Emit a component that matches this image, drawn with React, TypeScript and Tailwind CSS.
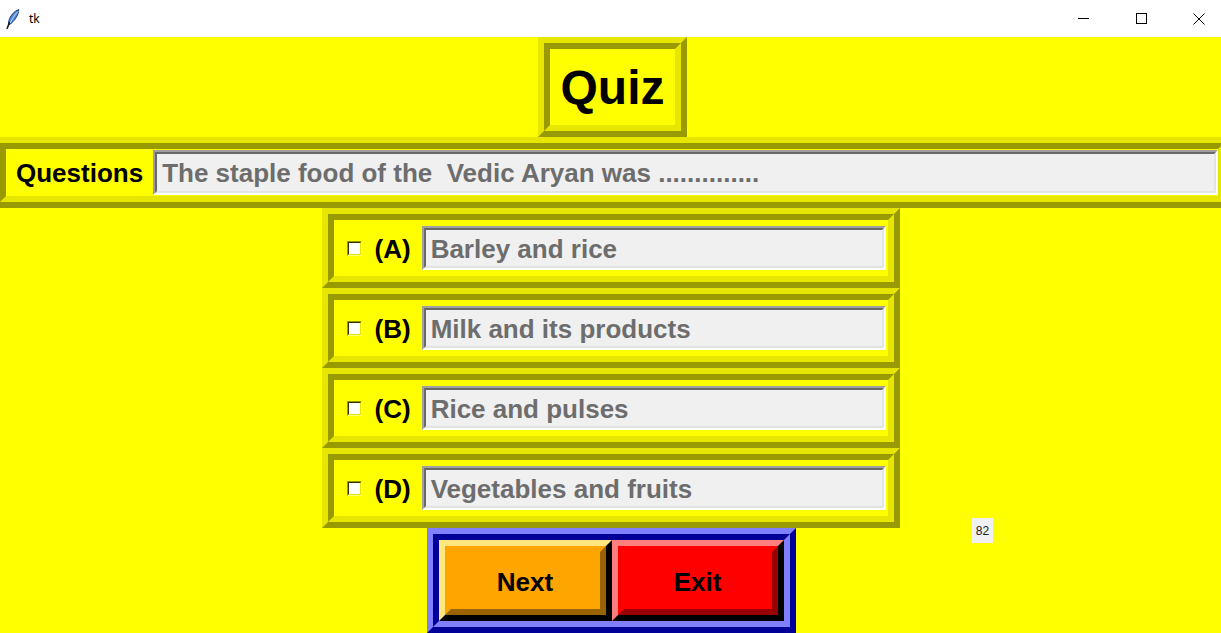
import React from "react";

type Option = {
  key: string;
  text: string;
};

const options: Option[] = [
  { key: "A", text: "Barley and rice" },
  { key: "B", text: "Milk and its products" },
  { key: "C", text: "Rice and pulses" },
  { key: "D", text: "Vegetables and fruits" },
];

// Tk "ridge" relief on a yellow background
const ridgeOuter =
  "border-[6px] border-t-[#e6e600] border-l-[#e6e600] border-r-[#999900] border-b-[#999900]";
const ridgeInner =
  "border-[6px] border-t-[#999900] border-l-[#999900] border-r-[#e6e600] border-b-[#e6e600]";

function Feather() {
  return (
    <svg width="14" height="20" viewBox="0 0 14 20">
      <path d="M12.8 0.6 C 8 2.2, 3.8 7, 2.6 13 L 2.4 16.2 L 5.2 14.4 C 9.4 10.6, 12.4 6, 12.8 0.6 Z" fill="#4f86d6" stroke="#1f3f7a" strokeWidth="1" />
      <path d="M11.8 2.6 C 8.6 6, 6 10, 4.2 14.2" stroke="#d4e4f8" strokeWidth="0.9" fill="none" />
      <path d="M3.4 13.8 L 1.2 19.2" stroke="#1b1b1b" strokeWidth="1.6" strokeLinecap="round" />
    </svg>
  );
}

function TitleBar() {
  return (
    <div className="flex h-[37px] items-center bg-white">
      <div className="ml-[6px] flex h-[20px] w-[14px] items-center">
        <Feather />
      </div>
      <span className="ml-[9px] font-['Noto_Sans',sans-serif] text-[12px] text-black">tk</span>
      <div className="-mr-[7px] ml-auto flex h-full">
        <div className="flex w-[58px] items-center justify-center">
          <div className="h-px w-[11px] bg-black" />
        </div>
        <div className="flex w-[58px] items-center justify-center">
          <div className="h-[11px] w-[11px] border border-black" />
        </div>
        <div className="flex w-[58px] items-center justify-center">
          <svg width="12" height="12" viewBox="0 0 12 12">
            <path d="M0.5 0.5 L11.5 11.5 M11.5 0.5 L0.5 11.5" stroke="black" strokeWidth="1" />
          </svg>
        </div>
      </div>
    </div>
  );
}

function Field({ text, className }: { text: string; className: string }) {
  return (
    <div
      className={`border-2 border-t-[#a0a0a0] border-l-[#a0a0a0] border-r-white border-b-white ${className}`}
    >
      <div className="flex h-full w-full items-center border-2 border-t-[#696969] border-l-[#696969] border-r-[#e3e3e3] border-b-[#e3e3e3] bg-[#f0f0f0] pt-[2px] pl-[5px] text-[26px] font-bold whitespace-pre text-[#6d6d6d]">
        {text}
      </div>
    </div>
  );
}

function Checkbox() {
  return (
    <div className="h-[15px] w-[15px] border border-t-[#999900] border-l-[#999900] border-r-[#ffff80] border-b-[#ffff80]">
      <div className="h-full w-full border border-t-[#303000] border-l-[#303000] border-r-[#e6e600] border-b-[#e6e600] bg-white" />
    </div>
  );
}

export default function App() {
  return (
    <div className="relative h-[633px] w-[1221px] overflow-hidden font-['Liberation_Sans',Arial,sans-serif] text-black">
      <TitleBar />

      <div className="flex h-[596px] flex-col bg-[#ffff00]">
        {/* heading */}
        <div className="flex justify-center">
          <div className={`ml-[4px] h-[100px] w-[149px] ${ridgeOuter}`}>
            <div className={`flex h-full w-full items-center justify-center pt-[2px] ${ridgeInner}`}>
              <span className="text-[48px] leading-none font-bold">Quiz</span>
            </div>
          </div>
        </div>

        {/* question row */}
        <div className={`-ml-[6px] h-[73px] w-[1236px] ${ridgeOuter}`}>
          <div className={`flex h-full w-full items-center ${ridgeInner}`}>
            <span className="ml-[10px] pt-[2px] text-[26px] font-bold">Questions</span>
            <Field
              className="ml-[10px] h-[45px] flex-1"
              text="The staple food of the  Vedic Aryan was .............."
            />
          </div>
        </div>

        {/* options */}
        <div className="flex flex-col items-center">
          {options.map((opt) => (
            <div key={opt.key} className={`h-[80px] w-[578px] ${ridgeOuter}`}>
              <div className={`flex h-full w-full items-center pl-[13px] pr-[2px] ${ridgeInner}`}>
                <Checkbox />
                <span className="ml-[13px] pt-[2px] text-[26px] font-bold">({opt.key})</span>
                <Field className="ml-[11px] h-[44px] flex-1" text={opt.text} />
              </div>
            </div>
          ))}
        </div>

        {/* buttons */}
        <div className="flex justify-center">
          <div className="ml-[1px] w-[369px] border-[6px] border-t-[#8080ff] border-l-[#8080ff] border-r-[#000099] border-b-[#000099]">
            <div className="flex w-full border-[6px] border-t-[#000099] border-l-[#000099] border-r-[#8080ff] border-b-[#8080ff] bg-[#0000ff]">
              <button className="h-[81px] w-[173px] border-[6px] border-t-[#ffe77f] border-l-[#ffe77f] border-r-black border-b-black">
                <div className="flex h-full w-full items-center justify-center border-[6px] border-t-[#ffa500] border-l-[#ffa500] border-r-[#996300] border-b-[#996300] bg-[#ffa500] pt-[3px] text-[26px] font-bold">
                  Next
                </div>
              </button>
              <button className="h-[81px] w-[172px] border-[6px] border-t-[#ff7f7f] border-l-[#ff7f7f] border-r-black border-b-black">
                <div className="flex h-full w-full items-center justify-center border-[6px] border-t-[#ff0000] border-l-[#ff0000] border-r-[#990000] border-b-[#990000] bg-[#ff0000] pt-[3px] text-[26px] font-bold">
                  Exit
                </div>
              </button>
            </div>
          </div>
        </div>
      </div>

      {/* countdown label */}
      <div className="absolute top-[518px] left-[972px] flex h-[25px] w-[21px] items-center justify-center bg-[#f0f0f0] text-[12px] text-[#222]">
        82
      </div>
    </div>
  );
}
